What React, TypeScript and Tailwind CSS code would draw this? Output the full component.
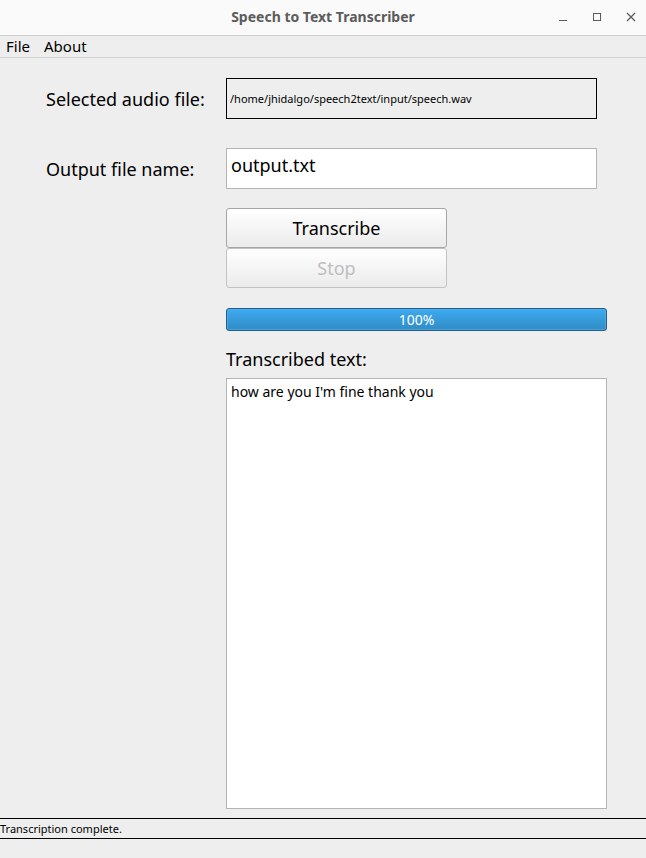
import { useState } from "react";

const FIELD = "border border-[#b4b4b4] bg-white px-1 outline-none";
const LABEL = "h-[41px] overflow-hidden text-lg leading-[43px] whitespace-nowrap";
const BUTTON =
  "h-10 w-full rounded-[3px] border bg-linear-to-b from-white to-[#ebebeb] text-lg leading-6";

function TitleBar() {
  return (
    <header className="flex h-9 items-center border-b border-[#cfcfcf] bg-[#fafafa] pb-px text-[#5c5c5c]">
      <div className="w-24" />
      <h1 className="flex-1 text-center text-sm font-bold">Speech to Text Transcriber</h1>
      <div className="flex w-24 items-center justify-end gap-3 pr-1">
        <button type="button" aria-label="Minimize" className="flex size-[22px] items-center justify-center">
          <svg width="10" height="10" viewBox="0 0 10 10" shapeRendering="crispEdges">
            <path d="M1 8.5h8" stroke="currentColor" fill="none" />
          </svg>
        </button>
        <button type="button" aria-label="Maximize" className="flex size-[22px] items-center justify-center">
          <svg width="10" height="10" viewBox="0 0 10 10" shapeRendering="crispEdges">
            <path d="M1.5 1.5h7v7h-7z" stroke="currentColor" fill="none" />
          </svg>
        </button>
        <button type="button" aria-label="Close" className="flex size-[22px] items-center justify-center">
          <svg width="10" height="10" viewBox="0 0 10 10">
            <path d="M1 1l8 8M9 1l-8 8" stroke="currentColor" strokeWidth="1.3" fill="none" />
          </svg>
        </button>
      </div>
    </header>
  );
}

export default function App() {
  const [fileName, setFileName] = useState("output.txt");
  const [text, setText] = useState("how are you I'm fine thank you");

  return (
    <div className="flex min-h-screen flex-col bg-[#eeeeee] font-['Noto_Sans',sans-serif] text-black">
      <TitleBar />
      <nav className="flex h-[22px] items-center gap-3.5 border-b border-[#d2d2d2] px-1.5 text-[15px]">
        <button type="button">File</button>
        <button type="button">About</button>
      </nav>

      <main className="grid flex-1 grid-cols-[162px_1fr] grid-rows-[auto_auto_1fr] gap-x-[18px] pt-5 pr-[39px] pb-[9px] pl-[46px]">
        <label htmlFor="audio" className={LABEL}>
          Selected audio file:
        </label>
        <output id="audio" className="mr-2.5 h-[41px] border border-black px-[3px] text-[11px] leading-10">
          /home/jhidalgo/speech2text/input/speech.wav
        </output>

        <label htmlFor="output-name" className={`${LABEL} mt-[29px]`}>
          Output file name:
        </label>
        <input
          id="output-name"
          type="text"
          value={fileName}
          onChange={(e) => setFileName(e.target.value)}
          className={`${FIELD} mt-[29px] mr-2.5 h-[41px] pb-2 text-lg leading-6`}
        />

        <div className="col-start-2 flex flex-col pt-[19px]">
          <div className="flex w-[221px] flex-col">
            <button type="button" className={`${BUTTON} border-[#a6a6a6]`}>
              Transcribe
            </button>
            <button type="button" disabled className={`${BUTTON} border-[#c2c2c2] text-[#bebebe]`}>
              Stop
            </button>
          </div>

          <div
            role="progressbar"
            aria-label="Transcription progress"
            aria-valuenow={100}
            aria-valuemin={0}
            aria-valuemax={100}
            className="mt-5 h-[23px] rounded-[3px] border border-[#205f8a] bg-linear-to-b from-[#3daaf0] to-[#308cc6] text-center text-sm leading-[22px] text-white inset-ring inset-ring-[#5bb0e8]/60"
          >
            100%
          </div>

          <label htmlFor="transcript" className="mt-4 mb-[7px] text-lg leading-6">
            Transcribed text:
          </label>
          <textarea
            id="transcript"
            value={text}
            onChange={(e) => setText(e.target.value)}
            className={`${FIELD} flex-1 resize-none py-[3px] text-sm leading-5`}
          />
        </div>
      </main>

      <footer className="mb-[19px] h-[21px] border-y border-black text-[11px] leading-[19px]">
        Transcription complete.
      </footer>
    </div>
  );
}
